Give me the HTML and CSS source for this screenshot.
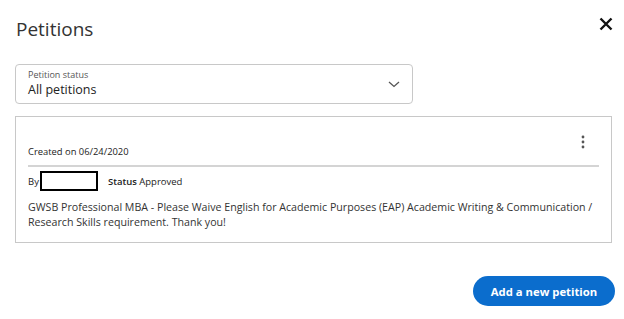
FILE: index.html
```html
<!DOCTYPE html>
<html lang="en">
<head>
  <meta charset="UTF-8">
  <title>Petitions</title>
  <link rel="stylesheet" href="styles.css">
</head>
<body>
  <div class="modal">
    <div class="header">
      <h1 class="title">Petitions</h1>
      <button class="close" aria-label="Close">
        <svg width="14" height="14" viewBox="0 0 14 14">
          <path d="M1.5 1.5 L12.5 12.5 M12.5 1.5 L1.5 12.5" stroke="#111" stroke-width="2.4" fill="none"/>
        </svg>
      </button>
    </div>

    <div class="select">
      <div class="select-text">
        <div class="select-label">Petition status</div>
        <div class="select-value">All petitions</div>
      </div>
      <svg class="chevron" width="12" height="7" viewBox="0 0 12 7">
        <path d="M1 1 L6 5.5 L11 1" stroke="#555" stroke-width="1.3" fill="none"/>
      </svg>
    </div>

    <div class="card">
      <div class="card-top">
        <div class="created">Created on 06/24/2020</div>
        <svg class="kebab" width="4" height="14" viewBox="0 0 4 14">
          <circle cx="2" cy="2" r="1.4" fill="#555"/>
          <circle cx="2" cy="7" r="1.4" fill="#555"/>
          <circle cx="2" cy="12" r="1.4" fill="#555"/>
        </svg>
      </div>
      <div class="meta">
        <span>By</span>
        <span class="redacted"></span>
        <span class="status"><b>Status</b> Approved</span>
      </div>
      <p class="desc">GWSB Professional MBA - Please Waive English for Academic Purposes (EAP) Academic Writing &amp; Communication / Research Skills requirement. Thank you!</p>
    </div>

    <div class="footer">
      <button class="add-btn">Add a new petition</button>
    </div>
  </div>
</body>
</html>
```

FILE: styles.css
```css
body {
  margin: 0;
  background: #fff;
  font-family: "Open Sans", Arial, sans-serif;
  color: #333;
}

.modal {
  width: 624px;
  height: 319px;
  box-sizing: border-box;
  padding: 16px 11px 0 15px;
}

.header {
  display: flex;
  justify-content: space-between;
  align-items: flex-start;
}

.title {
  margin: 0 0 0 1px;
  font-size: 19px;
  font-weight: 400;
  line-height: 27px;
  color: #333;
}

.close {
  border: 0;
  background: none;
  padding: 0;
  margin: 1px 0 0 0;
  width: 14px;
  height: 14px;
  cursor: pointer;
}

.select {
  margin-top: 21px;
  width: 398px;
  height: 40px;
  box-sizing: border-box;
  border: 1px solid #c8c8c8;
  border-radius: 4px;
  display: flex;
  align-items: center;
  justify-content: space-between;
  padding: 0 12px 0 12px;
}

.select-label {
  font-size: 9px;
  line-height: 12px;
  color: #555;
}

.select-value {
  font-size: 12.5px;
  line-height: 18px;
  color: #222;
}

.card {
  margin-top: 12px;
  width: 597px;
  box-sizing: border-box;
  border: 1px solid #c8c8c8;
  padding: 0 12px 0 12px;
  height: 127px;
}

.card-top {
  display: flex;
  justify-content: space-between;
  align-items: flex-end;
  height: 50px;
  border-bottom: 2px solid #d4d4d4;
  padding-bottom: 6px;
  box-sizing: border-box;
}

.created {
  font-size: 9.4px;
  color: #222;
  line-height: 14px;
}

.kebab {
  margin: 0 14px 10px 0;
}

.meta {
  display: flex;
  align-items: center;
  font-size: 9.5px;
  color: #222;
  margin-top: 4px;
  height: 20px;
}

.redacted {
  width: 54px;
  height: 16px;
  border: 2px solid #000;
  margin-left: 1px;
}

.status {
  margin-left: 10px;
}

.status b {
  font-weight: 600;
}

.desc {
  margin: 9px 0 0 0;
  font-size: 10.65px;
  line-height: 15px;
  color: #333;
}

.footer {
  display: flex;
  justify-content: flex-end;
  margin-top: 33px;
}

.add-btn {
  background: #0b6dcd;
  color: #fff;
  border: 0;
  border-radius: 15px;
  width: 142px;
  height: 30px;
  margin-right: -2px;
  font-family: "Open Sans", Arial, sans-serif;
  font-size: 11.3px;
  font-weight: 700;
  cursor: pointer;
}
```
